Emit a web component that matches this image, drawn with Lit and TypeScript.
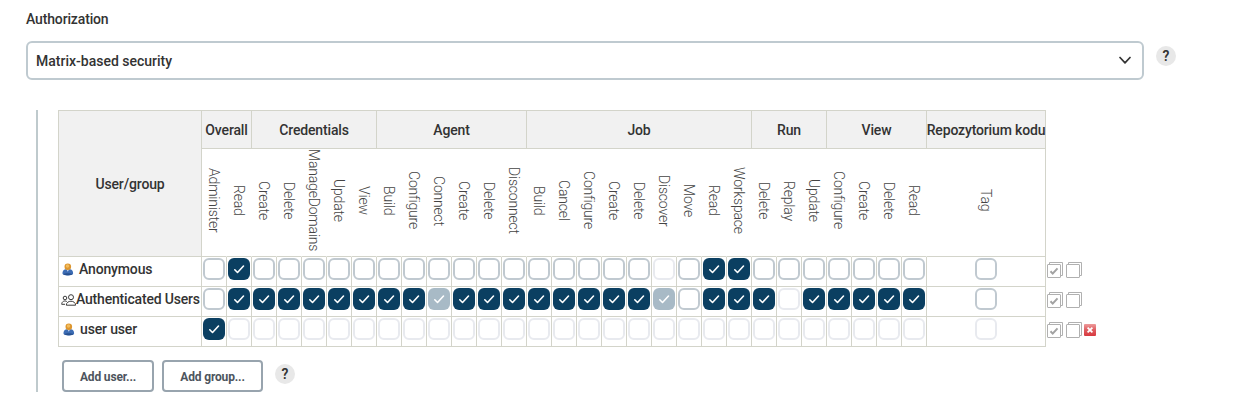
import { LitElement, html, css, svg, nothing } from "lit";
import { customElement } from "lit/decorators.js";

interface Group { name: string; cls: string; perms: string[] }

const GROUPS: Group[] = [
  { name: "Overall", cls: "s2", perms: ["Administer", "Read"] },
  { name: "Credentials", cls: "s5", perms: ["Create", "Delete", "ManageDomains", "Update", "View"] },
  { name: "Agent", cls: "s6", perms: ["Build", "Configure", "Connect", "Create", "Delete", "Disconnect"] },
  { name: "Job", cls: "s9", perms: ["Build", "Cancel", "Configure", "Create", "Delete", "Discover", "Move", "Read", "Workspace"] },
  { name: "Run", cls: "s3", perms: ["Delete", "Replay", "Update"] },
  { name: "View", cls: "s4", perms: ["Configure", "Create", "Delete", "Read"] },
  { name: "Repozytorium kodu", cls: "s1", perms: ["Tag"] },
];

// o = unchecked, x = checked, d = unchecked and disabled, g = checked and disabled
const ROWS = [
  { name: "Anonymous", icon: "user", cls: "r1", removable: false, cells: "oxoooooooooooooooodoxxooooooo" + "o" },
  { name: "Authenticated Users", icon: "group", cls: "r2", removable: false, cells: "oxxxxxxxxgxxxxxxxxgoxxxdxxxxx" + "o" },
  { name: "user user", icon: "user", cls: "r3", removable: true, cells: "x" + "d".repeat(29) },
];

const userIcon = html`<svg class="user" width="12" height="13" viewBox="0 0 12 13">
  <path d="M.5 10.800C.3 8.200 1.400 6.800 3.400 6.200h4.800c2 .6 3.100 2 2.900 4.600-.3 2.200-10.300 2.200-10.600 0z" fill="#3c6cb4"/>
  <path d="M1.300 11.200c2 1.500 7 1.500 9 0-1.500-1.200-7.500-1.200-9 0z" fill="#27508f"/>
  <path d="M4.500 6.300L5.800 8.700l1.300-2.400z" fill="#d5dff0"/>
  <circle cx="5.800" cy="3.700" r="3.300" fill="#dd962f"/><circle cx="5.500" cy="3" r="1.700" fill="#f3bc5c"/></svg>`;

const groupIcon = html`<svg class="group" width="16" height="12" viewBox="0 0 16 12" fill="none" stroke="#3a3a3a" stroke-width="1">
  <circle cx="4" cy="4" r="1.800"/><circle cx="10" cy="3.200" r="2.500"/>
  <path d="M5.800 7.500C3.500 6.300.8 7.300.7 10.300H4M5.300 11.200c0-5.300 9.300-5.300 9.300 0z"/></svg>`;

const stack = (checked: boolean) => html`<svg class="stack" width="17" height="17" viewBox="0 0 17 17" fill="none" stroke="#b0b0b0">
  <path d="M2.500 2.500v-2h13v13h-2"/><rect x=".5" y="2.500" width="13" height="13" rx=".5" fill="#fff"/>
  ${checked ? svg`<path d="M3.500 9.300l2.200 2.300L10.500 6.300" stroke-width="2" stroke="#a2a2a2"/>` : nothing}</svg>`;

const removeIcon = html`<svg class="remove" width="12" height="12" viewBox="0 0 12 12">
  <defs><linearGradient id="red" x2="0" y2="1"><stop offset="0" stop-color="#ee9b9b"/><stop offset=".5" stop-color="#de5c60"/><stop offset="1" stop-color="#d8383e"/></linearGradient></defs>
  <rect width="12" height="12" rx="1" fill="url(#red)"/>
  <path d="M3.600 3.600l4.800 4.800m0-4.800l-4.800 4.800" stroke="#fff" stroke-width="1.800"/></svg>`;

@customElement("app-root")
export class AppRoot extends LitElement {
  static styles = css`
    :host { display: block; box-sizing: border-box; width: 1253px; height: 412px; padding: 10px 0 0 26px; background: #fff; color: #333; font: 500 14px/18px Roboto, sans-serif; letter-spacing: -.15px; overflow: hidden; }
    * { box-sizing: border-box; }
    svg { display: block; flex: none; }
    .line { display: flex; gap: 12px; margin-top: 13px; }
    .select { display: flex; align-items: center; justify-content: space-between; width: 1118px; height: 39px; padding: 0 11px 0 8px; border: 2px solid #bfcad0; border-radius: 6px; letter-spacing: 0; }
    .help { width: 20px; height: 20px; border-radius: 50%; background: #e8e8e8; font-weight: 600; text-align: center; line-height: 20px; margin-top: 5px; letter-spacing: 0; }
    .section { margin: 30px 0 0 10px; padding-left: 20px; height: 282px; border-left: 2px solid #bfcacd; }
    .area { display: flex; }
    .matrix { display: grid; grid-template-columns: 143px repeat(29, 25px) 119px; grid-template-rows: 38px 108px 30px 30px 30px; border: solid #d3d4ca; border-width: 1px 0 0 1px; width: 988px; height: 237px; }
    .cell { border: solid #d3d4ca; border-width: 0 1px 1px 0; display: flex; min-width: 0; }
    .head { background: #f1f1f1; align-items: center; justify-content: center; white-space: nowrap; }
    .corner { grid-row: span 2; }
    .s1 { grid-column: span 1; } .s2 { grid-column: span 2; } .s3 { grid-column: span 3; } .s4 { grid-column: span 4; }
    .s5 { grid-column: span 5; } .s6 { grid-column: span 6; } .s9 { grid-column: span 9; }
    .perm { border-right-color: transparent; align-items: center; justify-content: center; padding-bottom: 4px; color: #444; }
    .perm.end { border-right-color: #d3d4ca; }
    .perm span { writing-mode: vertical-rl; font-weight: 300; white-space: nowrap; line-height: 16px; letter-spacing: -.19px; }
    .box { padding-top: 1px; justify-content: center; }
    .check { display: block; width: 22px; height: 22px; flex: none; border: 2px solid #c0c9d0; border-radius: 6px; }
    .check.d { border-color: #e8eaef; }
    .check.x, .check.g { border: 0; background: #0b3f61; }
    .check.g { background: #a8bac6; }
    .name { white-space: nowrap; padding-top: 3px; }
    .r1 .user { margin: 3px 5px 0 3px; }
    .r2 .group { margin: 4px 0 0 2px; }
    .r2 span { margin-left: -1px; letter-spacing: -.19px; }
    .r3 .user { margin: 3px 5px 0 4px; }
    .tools { padding-top: 147px; }
    .tool { display: flex; height: 30px; padding: 5px 0 0 1px; gap: 2px; }
    .remove { margin-top: 2px; margin-left: -1px; }
    .actions { display: flex; margin: 13px 0 0 4px; }
    .btn { height: 32px; border: 2px solid #98a4ae; border-radius: 4px; font: 700 12px/28px Roboto, sans-serif; letter-spacing: -.15px; color: #4d545d; text-align: center; margin-right: 8px; padding: 1px 0 0; background: #fff; }
    .b1 { width: 92px; } .b2 { width: 101px; margin-right: 12px; }
    .actions .help { margin-top: 4px; }
  `;

  private row(r: (typeof ROWS)[number]) {
    return html`<div class="cell name ${r.cls}">${r.icon === "user" ? userIcon : groupIcon}<span>${r.name}</span></div>
      ${[...r.cells].map((c) => html`<div class="cell box"><span class="check ${c}">${c === "x" || c === "g"
        ? html`<svg width="22" height="22" viewBox="0 0 22 22" fill="none" stroke="#fff" stroke-width="1.600" stroke-linecap="round" stroke-linejoin="round"><path d="M6.800 11.800l2.700 2.700L15.500 8"/></svg>` : nothing}</span></div>`)}`;
  }

  render() {
    const perms = GROUPS.flatMap((g) => g.perms);
    return html`<div>Authorization</div>
      <div class="line">
        <div class="select"><span>Matrix-based security</span>
          <svg width="12" height="9" viewBox="0 0 12 9" fill="none" stroke="#333" stroke-width="1.700" stroke-linecap="round" stroke-linejoin="round"><path d="M1 1.500L6 6.800l5-5.300"/></svg></div>
        <div class="help">?</div>
      </div>
      <div class="section">
        <div class="area">
          <div class="matrix">
            <div class="cell head corner">User/group</div>
            ${GROUPS.map((g) => html`<div class="cell head ${g.cls}">${g.name}</div>`)}
            ${perms.map((p, i) => html`<div class="cell perm ${i === perms.length - 1 ? "end" : ""}"><span>${p}</span></div>`)}
            ${ROWS.map((r) => this.row(r))}
          </div>
          <div class="tools">${ROWS.map((r) => html`<div class="tool">${stack(true)}${stack(false)}${r.removable ? removeIcon : nothing}</div>`)}</div>
        </div>
        <div class="actions"><button class="btn b1">Add user...</button><button class="btn b2">Add group...</button><div class="help">?</div></div>
      </div>`;
  }
}
